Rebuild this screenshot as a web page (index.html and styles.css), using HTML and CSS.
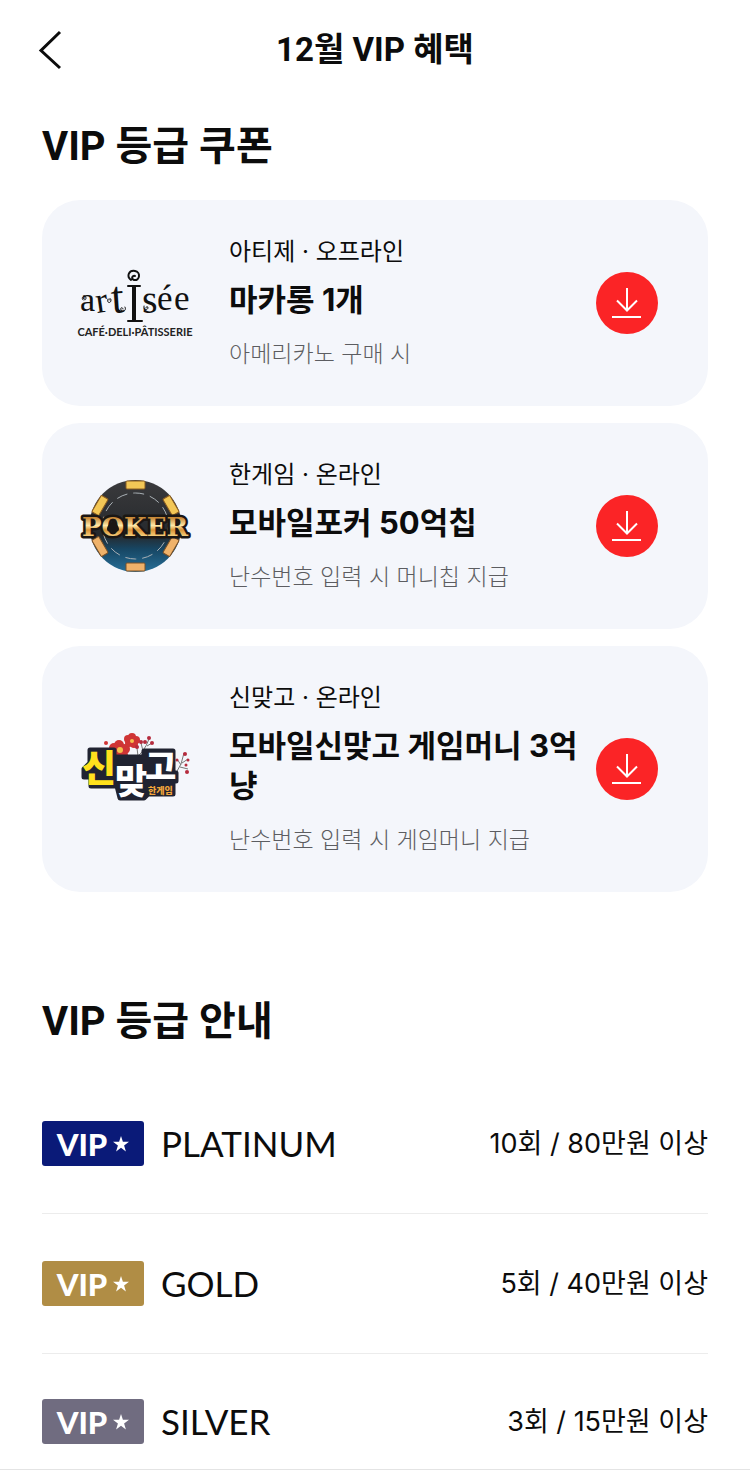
FILE: index.html
```html
<!DOCTYPE html>
<html lang="ko">
<head>
    <meta charset="UTF-8">
    <meta name="viewport" content="width=device-width, initial-scale=1.0">
    <title>12월 VIP 혜택</title>
    <link rel="stylesheet" href="styles.css">
</head>
<body>
    <!-- Top bar -->
    <header class="topbar">
        <button class="back" type="button" aria-label="뒤로">
            <svg width="24" height="40" viewBox="0 0 24 40">
                <path d="M22 2 3 20.500 22 38" fill="none" stroke="#0c0c0c" stroke-width="3"/>
            </svg>
        </button>
        <h1>12월 VIP 혜택</h1>
    </header>

    <main>
        <!-- Coupons -->
        <section class="coupons">
            <h2>VIP 등급 쿠폰</h2>

            <article class="coupon">
                <svg class="logo" viewBox="0 0 114 100" role="img" aria-label="artisée">
                    <g class="artisee">
                        <text x="2" y="58" font-size="34">a</text>
                        <text x="19" y="60" font-size="36" transform="rotate(-8 19 60)">r</text>
                        <text x="34" y="60" font-size="46" transform="rotate(-4 34 60)">t</text>
                        <text x="64" y="60" font-size="40">s</text>
                        <text x="79" y="57" font-size="35">é</text>
                        <text x="96" y="57" font-size="35">e</text>
                    </g>
                    <g fill="none" stroke="#111" stroke-linecap="round">
                        <path d="M56 34V67" stroke-width="4" stroke-linecap="butt"/>
                        <path d="M50 33H62M50 68H64" stroke-width="2"/>
                        <path d="M53 27C48 23 51 17 57 18C63 19 62 28 56 27C53 26 54 22 57 23" stroke-width="2"/>
                        <path d="M5 47C2 44 8 41 8 45C8 48 5 47 6 45M30 46C28 50 33 51 33 47C33 45 31 45 31 47M47 54C49 57 45 60 43 57C42 54 45 54 45 56M66 53C65 57 69 58 70 55C70 53 68 53 68 55" stroke-width="1"/>
                    </g>
                    <text class="artisee-sub" x="57" y="83" text-anchor="middle">CAFÉ·DELI·PÂTISSERIE</text>
                </svg>
                <div class="info">
                    <p class="brand">아티제 · 오프라인</p>
                    <h3>마카롱 1개</h3>
                    <p class="note">아메리카노 구매 시</p>
                </div>
                <button class="download" type="button" aria-label="마카롱 쿠폰 받기">
                    <svg width="32" height="34" viewBox="0 0 32 34"><path d="M16 2V24M6 14.500 16 24.500 26 14.500M1 31H30"/></svg>
                </button>
            </article>

            <article class="coupon">
                <svg class="logo" viewBox="0 0 114 100" role="img" aria-label="POKER">
                    <defs>
                        <linearGradient id="chip" x1="0" y1="0" x2="0" y2="1">
                            <stop offset="0" stop-color="#3a3a3c"/>
                            <stop offset=".6" stop-color="#26292d"/>
                            <stop offset=".75" stop-color="#174663"/>
                            <stop offset="1" stop-color="#276f98"/>
                        </linearGradient>
                        <linearGradient id="gold" x1="0" y1="0" x2="0" y2="1">
                            <stop offset=".2" stop-color="#c98a38"/>
                            <stop offset=".45" stop-color="#ffe9a8"/>
                            <stop offset=".6" stop-color="#d99335"/>
                            <stop offset=".8" stop-color="#f6cf7c"/>
                        </linearGradient>
                    </defs>
                    <circle cx="57.500" cy="50" r="46" fill="url(#chip)"/>
                    <g fill="#f3c756" stroke="#8a5c20" stroke-width="1">
                        <rect x="48" y="5" width="19" height="8" rx="1"/>
                        <rect x="48" y="5" width="19" height="8" rx="1" transform="rotate(60 57.500 50)"/>
                        <rect x="48" y="5" width="19" height="8" rx="1" transform="rotate(-60 57.500 50)"/>
                    </g>
                    <g fill="#efb26a" stroke="#7a5026" stroke-width="1">
                        <rect x="48" y="5" width="19" height="8" rx="1" transform="rotate(120 57.500 50)"/>
                        <rect x="48" y="5" width="19" height="8" rx="1" transform="rotate(180 57.500 50)"/>
                        <rect x="48" y="5" width="19" height="8" rx="1" transform="rotate(240 57.500 50)"/>
                    </g>
                    <circle cx="57.500" cy="50" r="33" fill="none" stroke="#a9b0b5" stroke-width="1" stroke-dasharray="11 6"/>
                    <text class="poker" x="57" y="60" text-anchor="middle" fill="url(#gold)">POKER</text>
                    <path d="M35 44C33 48 29 49 29 53C29 56 33 57 34 54L33 58H37L36 54C37 57 41 56 41 53C41 49 37 48 35 44Z" fill="#1b1714"/>
                </svg>
                <div class="info">
                    <p class="brand">한게임 · 온라인</p>
                    <h3>모바일포커 50억칩</h3>
                    <p class="note">난수번호 입력 시 머니칩 지급</p>
                </div>
                <button class="download" type="button" aria-label="모바일포커 쿠폰 받기">
                    <svg width="32" height="34" viewBox="0 0 32 34"><path d="M16 2V24M6 14.500 16 24.500 26 14.500M1 31H30"/></svg>
                </button>
            </article>

            <article class="coupon">
                <svg class="logo" viewBox="0 0 114 100" role="img" aria-label="신맞고 한게임">
                    <!-- flowers -->
                    <g fill="#cf3535">
                        <circle cx="28" cy="24" r="2"/>
                        <circle cx="41" cy="26" r="5"/><circle cx="47" cy="30" r="5"/><circle cx="45" cy="36" r="5"/>
                        <circle cx="38" cy="35" r="5"/><circle cx="36" cy="29" r="5"/>
                        <circle cx="54" cy="18" r="4"/><circle cx="58" cy="21" r="4"/><circle cx="56" cy="25" r="4"/>
                        <circle cx="51" cy="24" r="4"/><circle cx="50" cy="20" r="4"/>
                    </g>
                    <circle cx="42" cy="31" r="3" fill="#f6c04c"/>
                    <circle cx="54" cy="22" r="2" fill="#f6c04c"/>
                    <g fill="none" stroke="#777" stroke-width="1">
                        <path d="M56 40Q66 34 71 20M60 37 59 29M65 32 63 24M64 33 72 32M69 27 74 24"/>
                        <path d="M98 54Q104 46 106 34M102 48 110 50M104 44 110 40M103 46 99 40"/>
                    </g>
                    <g fill="#b52b3d">
                        <circle cx="59" cy="28" r="2"/><circle cx="63" cy="23" r="2"/><circle cx="67" cy="23" r="2"/>
                        <circle cx="71" cy="19" r="2"/><circle cx="74" cy="24" r="2"/><circle cx="73" cy="32" r="2"/>
                        <circle cx="107" cy="35" r="2"/><circle cx="110" cy="41" r="1.500"/><circle cx="108" cy="46" r="1.500"/>
                        <circle cx="109" cy="53" r="2"/><circle cx="99" cy="41" r="1.500"/>
                    </g>
                    <!-- dark plate behind the letters -->
                    <path d="M12 31H36V38H66V32H95V54H98V62H95V75H70L66 79H42L39 67H13V58H6V50L12 44Z" fill="#202331" stroke="#202331" stroke-width="5" stroke-linejoin="round"/>
                    <g class="matgo">
                        <text x="4" y="63" font-size="37" fill="#ffe11d">신</text>
                        <text x="37" y="75" font-size="35" fill="#fff">맞</text>
                        <text x="67" y="60" font-size="34" fill="#fff">고</text>
                    </g>
                    <text class="hangame" x="70" y="75">한게임</text>
                </svg>
                <div class="info">
                    <p class="brand">신맞고 · 온라인</p>
                    <h3>모바일신맞고 게임머니 3억냥</h3>
                    <p class="note">난수번호 입력 시 게임머니 지급</p>
                </div>
                <button class="download" type="button" aria-label="모바일신맞고 쿠폰 받기">
                    <svg width="32" height="34" viewBox="0 0 32 34"><path d="M16 2V24M6 14.500 16 24.500 26 14.500M1 31H30"/></svg>
                </button>
            </article>
        </section>

        <!-- Grades -->
        <section class="grades">
            <h2>VIP 등급 안내</h2>
            <ul>
                <li>
                    <span class="badge platinum">VIP<svg width="16" height="16" viewBox="0 0 16 16"><path d="M8 0 9.900 5.700H16L11.100 9.400 12.900 15.500 8 11.800 3.100 15.500 4.900 9.400 0 5.700H6.100Z"/></svg></span>
                    <span class="name">PLATINUM</span>
                    <span class="rule">10회 / 80만원 이상</span>
                </li>
                <li>
                    <span class="badge gold">VIP<svg width="16" height="16" viewBox="0 0 16 16"><path d="M8 0 9.900 5.700H16L11.100 9.400 12.900 15.500 8 11.800 3.100 15.500 4.900 9.400 0 5.700H6.100Z"/></svg></span>
                    <span class="name">GOLD</span>
                    <span class="rule">5회 / 40만원 이상</span>
                </li>
                <li>
                    <span class="badge silver">VIP<svg width="16" height="16" viewBox="0 0 16 16"><path d="M8 0 9.900 5.700H16L11.100 9.400 12.900 15.500 8 11.800 3.100 15.500 4.900 9.400 0 5.700H6.100Z"/></svg></span>
                    <span class="name">SILVER</span>
                    <span class="rule">3회 / 15만원 이상</span>
                </li>
            </ul>
        </section>
    </main>
    <footer></footer>
</body>
</html>
```
FILE: styles.css
```css
* {
    box-sizing: border-box;
    margin: 0;
    padding: 0;
}

body {
    font-family: Inter, "Noto Sans CJK KR", sans-serif;
    background-color: #fff;
    color: #0c0c0c;
}

button {
    border: none;
    background: none;
    cursor: pointer;
}

/* Top bar */
.topbar {
    display: grid;
    grid-template-columns: 60px 1fr 60px;
    align-items: center;
    height: 100px;
    padding: 0 38px;
}

.back {
    display: flex;
}

.topbar h1 {
    font-family: Roboto, "Noto Sans CJK KR", sans-serif;
    font-size: 33px;
    line-height: 42px;
    font-weight: 700;
    text-align: center;
}

main {
    padding: 0 42px;
}

h2 {
    font-family: Roboto, "Noto Sans CJK KR", sans-serif;
    font-size: 40px;
    line-height: 54px;
    font-weight: 700;
}

/* Coupons */
.coupons {
    display: flex;
    flex-direction: column;
    gap: 17px;
    padding-top: 20px;
}

.coupons h2 {
    margin-bottom: 9px;
}

.coupon {
    display: flex;
    align-items: center;
    padding: 35px 50px 35px 36px;
    border-radius: 38px;
    background-color: #f4f6fb;
}

.logo {
    flex: none;
    width: 114px;
    height: 100px;
    margin-right: 37px;
    overflow: visible;
}

.info {
    flex: 1;
}

.brand,
.note {
    font-size: 23px;
    line-height: 34px;
}

.brand {
    font-size: 24px;
}

.note {
    font-weight: 300;
    color: #5c5d61;
}

.info h3 {
    margin: 11px 0 17px;
    font-size: 31px;
    line-height: 40px;
    font-weight: 700;
}

.download {
    display: flex;
    flex: none;
    align-items: center;
    justify-content: center;
    width: 62px;
    height: 62px;
    border-radius: 50%;
    background-color: #fb2426;
}

.download path {
    fill: none;
    stroke: #fff;
    stroke-width: 2;
}

/* Logo lettering */
.artisee {
    font-family: "Liberation Serif", serif;
    fill: #111;
}

.artisee-sub {
    font-family: Lato, sans-serif;
    font-size: 11px;
    font-weight: 700;
    fill: #222;
}

.poker {
    font-family: "DejaVu Serif", serif;
    font-size: 26px;
    font-weight: 700;
    stroke: #1b1714;
    stroke-width: 5;
    stroke-linejoin: round;
    paint-order: stroke;
}

.matgo {
    font-family: "Noto Sans CJK KR", sans-serif;
    font-weight: 900;
}

.hangame {
    font-family: "Noto Sans CJK KR", sans-serif;
    font-size: 9px;
    font-weight: 900;
    fill: #f2a53a;
}

/* Grades */
.grades {
    padding-top: 103px;
}

.grades ul {
    margin-top: 25px;
    list-style: none;
}

.grades li {
    display: flex;
    align-items: center;
    height: 140px;
    border-bottom: 1px solid #ececec;
}

.grades li:last-child {
    height: 115px;
    padding-top: 20px;
    border-bottom: none;
}

.badge {
    display: flex;
    align-items: center;
    justify-content: center;
    gap: 6px;
    width: 102px;
    height: 45px;
    border-radius: 3px;
    color: #fff;
    font-family: Lato, sans-serif;
    font-size: 31px;
    font-weight: 900;
}

.badge svg {
    fill: #fff;
}

.platinum {
    background-color: #0a1a78;
}

.gold {
    background-color: #b08d45;
}

.silver {
    background-color: #706c80;
}

.name {
    margin-left: 17px;
    padding-bottom: 2px;
    font-family: Lato, sans-serif;
    font-size: 35px;
}

.rule {
    margin-left: auto;
    padding-bottom: 4px;
    font-size: 27px;
}

footer {
    border-top: 1px solid #e4e4e4;
}
```
